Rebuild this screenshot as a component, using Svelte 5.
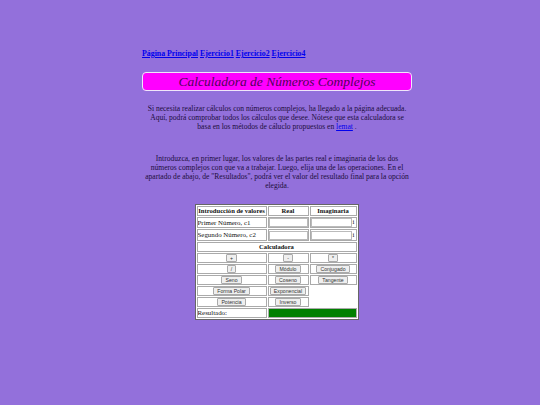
<script>
    const binary = [
        ['+', '-', '*'],
        ['/', 'Módulo', 'Conjugado'],
        ['Seno', 'Coseno', 'Tangente']
    ]
</script>

<div class="page">
    <nav class="links">
        <a href="#p">Página Principal</a>
        <a href="#e1">Ejercicio1</a>
        <a href="#e2">Ejercicio2</a>
        <a href="#e4">Ejercicio4</a>
    </nav>

    <h1>Calculadora de Números Complejos</h1>

    <p class="intro">
        Si necesita realizar cálculos con números complejos, ha llegado a la página adecuada.
        Aquí, podrá comprobar todos los cálculos que desee. Nótese que esta calculadora se
        basa en los métodos de cáluclo propuestos en <a href="#l">lemat</a> .
    </p>

    <p class="howto">
        Introduzca, en primer lugar, los valores de las partes real e imaginaria de los dos
        números complejos con que va a trabajar. Luego, elija una de las operaciones. En el
        apartado de abajo, de "Resultados", podrá ver el valor del resultado final para la opción
        elegida.
    </p>

    <table>
        <tbody>
            <tr class="head">
                <th class="first">Introducción de valores</th>
                <th class="second">Real</th>
                <th>Imaginaria</th>
            </tr>
            <tr class="num">
                <td>Primer Número, c1</td>
                <td><input type="text" /></td>
                <td><input type="text" /><span class="i">i</span></td>
            </tr>
            <tr class="num">
                <td>Segundo Número, c2</td>
                <td><input type="text" /></td>
                <td><input type="text" /><span class="i">i</span></td>
            </tr>
            <tr class="head">
                <th colspan="3">Calculadora</th>
            </tr>
            {#each binary as row}
                <tr>
                    {#each row as op}
                        <td class="op"><button>{op}</button></td>
                    {/each}
                </tr>
            {/each}
            <tr>
                <td class="op"><button>Forma Polar</button></td>
                <td class="op"><button>Exponencial</button></td>
                <td class="empty" rowspan="2"></td>
            </tr>
            <tr>
                <td class="op"><button>Potencia</button></td>
                <td class="op"><button>Inverso</button></td>
            </tr>
            <tr>
                <td>Resultado:</td>
                <td class="result" colspan="2"></td>
            </tr>
        </tbody>
    </table>
</div>

<style>
    :global(body) {
        background: #9370db;
    }

    .page {
        width: 270px;
        margin-left: 142px;
        padding-top: 49px;
        font-family: "Liberation Serif", serif;
        font-size: 7.55px;
        line-height: 9px;
        color: #1c0d3c;
    }

    a {
        color: #0000ee;
    }

    .links {
        font-weight: bold;
        font-size: 7.85px;
    }

    h1 {
        margin: 14px 0 0;
        height: 19px;
        line-height: 17px;
        box-sizing: border-box;
        text-align: center;
        font-size: 13.5px;
        font-weight: normal;
        font-style: italic;
        color: #50005a;
        background: #ff00ff;
        border: 1px solid #f0e6fa;
        border-radius: 4px;
    }

    p {
        margin: 0;
        text-align: center;
    }

    .intro {
        margin-top: 13px;
        padding: 0 2px;
    }

    .howto {
        margin-top: 23px;
    }

    table {
        margin: 14px 0 0 52.5px;
        width: 164px;
        table-layout: fixed;
        background: #fff;
        color: #111;
        border: 1px solid #666;
        border-spacing: 1px;
        font-size: 6.9px;
        line-height: 8px;
    }

    th, td {
        box-sizing: border-box;
        padding: 0;
        height: 10px;
        border: 1px solid #aaa;
        white-space: nowrap;
        overflow: hidden;
    }

    .head th {
        height: 8.6px;
        text-align: center;
        font-size: 6.6px;
    }

    th.first {
        width: 70px;
    }

    th.second {
        width: 41px;
    }

    .num td {
        height: 11.4px;
    }

    td.op {
        text-align: center;
    }

    td.empty {
        border: none;
    }

    td.result {
        background: #008000;
    }

    input {
        box-sizing: border-box;
        width: 39px;
        height: 9px;
        padding: 0;
        vertical-align: top;
        border: 1px solid #bbb;
        background: #fff;
    }

    td:last-child input {
        width: 41px;
        margin-left: 0;
    }

    .i {
        margin-left: 1px;
    }

    button {
        height: 8px;
        padding: 0 3px;
        vertical-align: top;
        font: 5.2px/6px "Liberation Sans", sans-serif;
        color: #333;
        background: #efefef;
        border: 1px solid #aaa;
        border-radius: 1px;
    }
</style>
